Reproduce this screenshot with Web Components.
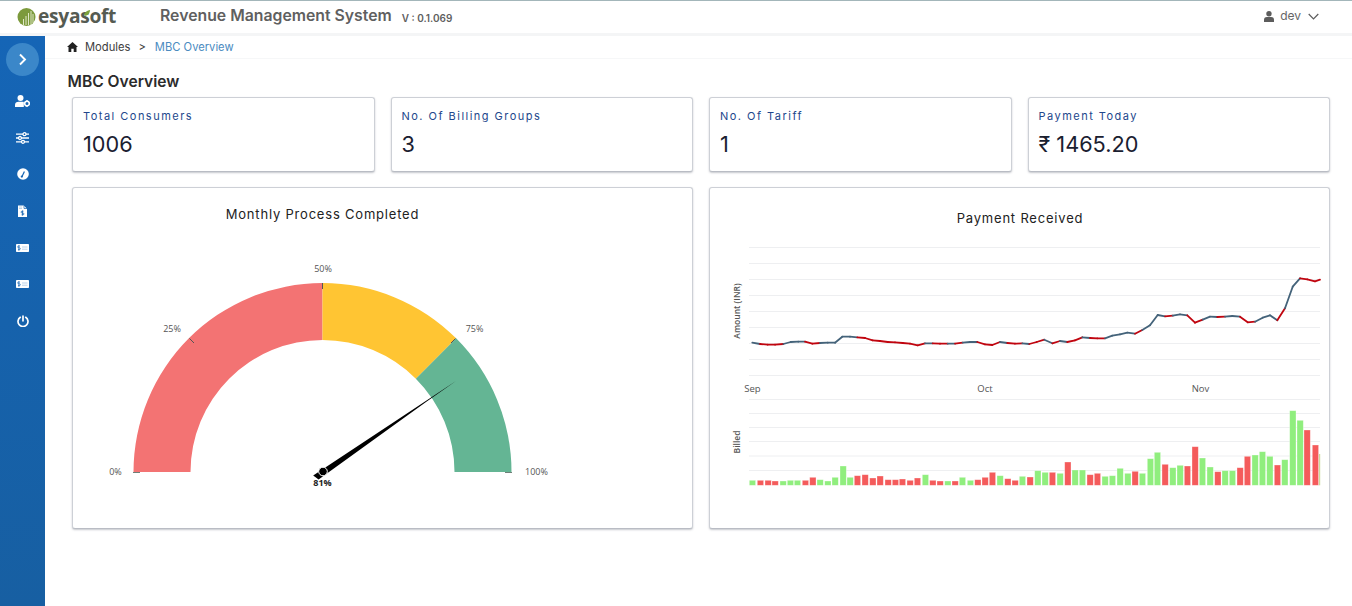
<!DOCTYPE html>
<html lang="en"><head><meta charset="utf-8"><title>MBC Overview</title>
<style>html,body{margin:0;padding:0;background:#fff;font-family:Inter,"Liberation Sans",sans-serif}</style>
</head><body>
<app-shell>
  <top-bar slot="top"></top-bar>
  <side-nav slot="side"></side-nav>
  <bread-crumb></bread-crumb>
  <page-title>MBC Overview</page-title>
  <stat-row>
    <stat-card label="Total Consumers" value="1006"></stat-card>
    <stat-card label="No. Of Billing Groups" value="3"></stat-card>
    <stat-card label="No. Of Tariff" value="1"></stat-card>
    <stat-card label="Payment Today" value="₹ 1465.20"></stat-card>
  </stat-row>
  <chart-row>
    <gauge-chart></gauge-chart>
    <payment-chart></payment-chart>
  </chart-row>
</app-shell>
<script>
function comp(name, html, setup){
  customElements.define(name, class extends HTMLElement{
    constructor(){super();this.attachShadow({mode:'open'});}
    connectedCallback(){
      this.shadowRoot.innerHTML = typeof html==='function'?html(this):html;
      if(setup)setup(this);
    }
  });
}
comp('app-shell',`<style>
:host{display:grid;grid-template-columns:45px 1fr;grid-template-rows:36px 1fr;width:100%;height:100vh;overflow:hidden;min-height:606px}
.top{grid-column:1/3}.main{display:flex;flex-direction:column;min-width:0}
</style><div class="top"><slot name="top"></slot></div><slot name="side"></slot><div class="main"><slot></slot></div>`);

comp('top-bar',`<style>
:host{display:flex;align-items:center;height:36px;box-sizing:border-box;border-top:1px solid #a3b6ba;border-bottom:3px solid #f4f5f6;background:#fff;padding-left:17px;color:#5c5c5c}
.logo{display:flex;align-items:center;width:143px;height:32px}
.brand{position:relative;font:700 19.2px/1 "Open Sans",sans-serif;color:#555b52;letter-spacing:-.3px;margin-left:1px;margin-top:-3px}
.leaf{position:absolute;left:44.500px;top:3.500px}
h1{margin:0;font:600 15.8px/1 Inter,sans-serif;color:#5f5f5f;margin-top:-2px}
.ver{font:600 10px/1 Inter,sans-serif;margin-left:10px;color:#5f5f5f;margin-top:2px}
.user{margin-left:auto;margin-right:33px;display:flex;align-items:center;font:400 12px/1 Inter,sans-serif;color:#666;margin-top:-2px}
.user span{margin:0 7px 0 6px}
</style>
<div class="logo">
<svg width="20" height="20" viewBox="0 0 20 20"><circle cx="9.500" cy="10" r="9" fill="#7c9a3c"/><g stroke="#dfe7c6" stroke-width="1"><path d="M6.500 18V12M9 18V9M11.500 18V6M14 18V4M16 16V7"/></g></svg>
<div class="brand">esyasoft<svg class="leaf" width="8" height="8" viewBox="0 0 9 9"><path d="M1 7C2 3 5 1.500 8 1 7.500 5 5 7.500 2.500 7.500Z" fill="#7fa23b"/></svg></div>
</div>
<h1>Revenue Management System</h1><div class="ver">V : 0.1.069</div>
<div class="user"><svg width="10" height="11" viewBox="0 0 10 11" fill="#5c5c5c"><circle cx="5" cy="2.800" r="2.700"/><path d="M0 11V8.500C0 6.800 1.500 6 2.800 6H7.200C8.500 6 10 6.800 10 8.500V11Z"/></svg><span>dev</span><svg width="11" height="7" viewBox="0 0 11 7" fill="none" stroke="#5c5c5c" stroke-width="1.200"><path d="M.7 1l4.800 4.800L10.300 1"/></svg></div>`);

comp('side-nav',`<style>
:host{display:flex;flex-direction:column;align-items:center;background:linear-gradient(#1565b6,#175fa2);padding-top:7px;box-sizing:border-box}
.toggle{width:33px;height:33px;border-radius:50%;background:#3b87c9;display:flex;align-items:center;justify-content:center;margin-bottom:6.670px}
.i{height:36.670px;display:flex;align-items:center;justify-content:center;width:100%}
svg{display:block}
</style>
<div class="toggle"><svg width="9" height="13" viewBox="0 0 9 13" fill="none" stroke="#fff" stroke-width="1.900"><path d="M2 1.500L7 6.500 2 11.500"/></svg></div>
<div class="i"><svg width="15" height="12" viewBox="0 0 15 12" fill="#fff"><circle cx="5.500" cy="3" r="3"/><path d="M0 12V10C0 8 1.500 6.800 3.500 6.800H7.500C8 6.800 8.500 7 8.800 7.100V12Z"/><circle cx="12" cy="8.500" r="2.300" fill="none" stroke="#fff" stroke-width="1.600"/><path d="M11.300 5h1.400v1.500h-1.400zM11.300 10.500h1.400V12h-1.400zM8.700 7.800h1.300v1.400H8.700zM14 7.800h1v1.400h-1z"/></svg></div>
<div class="i"><svg width="13" height="12" viewBox="0 0 13 12" fill="none" stroke="#fff" stroke-width="1.300"><path d="M0 2.200h13M0 6h13M0 9.800h13"/><circle cx="8.500" cy="2.200" r="1.500" fill="#1564b3"/><circle cx="4" cy="6" r="1.500" fill="#1564b3"/><circle cx="7" cy="9.800" r="1.500" fill="#1564b3"/></svg></div>
<div class="i"><svg width="12" height="12" viewBox="0 0 12 12"><circle cx="6" cy="6" r="5.800" fill="#fff"/><path d="M4.800 9L7.400 3.400" stroke="#1564b3" stroke-width="1.200"/><circle cx="4.800" cy="8.600" r="1.100" fill="#1564b3"/></svg></div>
<div class="i"><svg width="9" height="12" viewBox="0 0 9 12"><path d="M0 .5h5.800L9 3.700V12H0Z" fill="#fff"/><path d="M6 .5V3.500H9" fill="none" stroke="#1564b3" stroke-width=".7"/><path d="M1 2h3M1 3.500h3" stroke="#8fb5da" stroke-width=".6"/><path d="M5.500 6.200H4a.9.900 0 0 0 0 1.800h1a.9.900 0 0 1 0 1.800H3.500M4.500 5.500v5" fill="none" stroke="#1564b3" stroke-width=".8"/></svg></div>
<div class="i"><svg width="13" height="8" viewBox="0 0 13 8"><rect width="13" height="8" rx=".8" fill="#fff"/><path d="M3.800 2H2.600a.8.800 0 0 0 0 1.800h.8a.8.800 0 0 1 0 1.800H2M2.900 1.200v5.600" fill="none" stroke="#1564b3" stroke-width=".7"/><path d="M6 3h5.500M6 5.200h5.500" stroke="#9dbfe0" stroke-width=".7"/></svg></div>
<div class="i"><svg width="13" height="8" viewBox="0 0 13 8"><rect width="13" height="8" rx=".8" fill="#fff"/><path d="M3.800 2H2.600a.8.800 0 0 0 0 1.800h.8a.8.800 0 0 1 0 1.800H2M2.900 1.200v5.600" fill="none" stroke="#1564b3" stroke-width=".7"/><path d="M6 3h5.500M6 5.200h5.500" stroke="#9dbfe0" stroke-width=".7"/></svg></div>
<div class="i"><svg width="12" height="12" viewBox="0 0 12 12" fill="none" stroke="#fff" stroke-width="1.700" stroke-linecap="round"><path d="M3.300 2.300a5 5 0 1 0 5.400 0M6 1v4.800"/></svg></div>`);

comp('bread-crumb',`<style>
:host{display:flex;align-items:center;height:23px;box-sizing:border-box;border-bottom:1px solid #f6f7f8;padding:1px 0 0 22px;font:400 11.200px/1 Inter,sans-serif;color:#3d3d3d}
.m{margin-left:7px}.s{margin:0 9px 0 8px}.c{color:#4b8bbf}
svg{margin-top:-1px}
</style><svg width="11" height="10" viewBox="0 0 11 10" fill="#222"><path d="M5.500 0L11 5H9.500V10H6.700V6.700H4.300V10H1.500V5H0Z"/></svg><span class="m">Modules</span><span class="s">&gt;</span><span class="c">MBC Overview</span>`);

comp('page-title',`<style>
:host{display:block;padding:14px 0 0 22.500px;height:38px;box-sizing:border-box;font:600 15.600px/17px Inter,sans-serif;color:#2b2b2b}
</style><slot></slot>`);

comp('stat-row',`<style>
:host{display:grid;grid-template-columns:repeat(4,1fr);gap:16px;margin:0 22px 0 27px}
</style><slot></slot>`);

comp('stat-card',h=>`<style>
:host{display:block;height:75px;box-sizing:border-box;border:1px solid #cdd0d6;border-bottom-color:#b9bcc4;border-radius:3px;box-shadow:0 1px 2px rgba(90,95,110,.35);background:#fff;padding:11px 10px}
.l{font:400 11px/14px Inter,sans-serif;letter-spacing:1.480px;color:#22478c}
.v{font:400 21.700px/29px Inter,sans-serif;color:#1a2030;margin-top:7px}
</style><div class="l">${h.getAttribute('label')}</div><div class="v">${h.getAttribute('value')}</div>`);

comp('chart-row',`<style>
:host{display:grid;grid-template-columns:1fr 1fr;gap:16px;margin:15px 22px 0 27px}
</style><slot></slot>`);

const cardCss=`:host{display:block;height:342px;box-sizing:border-box;border:1px solid #cdd0d6;border-bottom-color:#b9bcc4;border-radius:3px;box-shadow:0 1px 2px rgba(90,95,110,.35);background:#fff;overflow:hidden}
svg{display:block;width:100%;height:100%}
text{font-family:"Open Sans",sans-serif}
.t{font:400 13px Inter,sans-serif;letter-spacing:.8px;fill:#222;text-anchor:middle}`;

const cx=322.5,cy=472,R=189,r=132;
function seg(a0,a1,col){
  const p=(rad,a)=>[(cx-rad*Math.cos(a)).toFixed(2),(cy-rad*Math.sin(a)).toFixed(2)].join(' ');
  return `<path fill="${col}" d="M${p(R,a0)}A${R} ${R} 0 0 1 ${p(R,a1)}L${p(r,a1)}A${r} ${r} 0 0 0 ${p(r,a0)}Z"/>`;
}
comp('gauge-chart',()=>{
  const pi=Math.PI;
  const lbl=(x,y,s,extra='')=>`<text x="${x}" y="${y}" font-size="9" fill="#555" text-anchor="middle" ${extra}>${s}</text>`;
  return `<style>${cardCss}</style><svg viewBox="73 188 619 340" preserveAspectRatio="none">
  <text class="t" x="322.500" y="219">Monthly Process Completed</text>
  ${seg(0,pi/2,'#f37373')}${seg(pi/2,pi*.75,'#ffc533')}${seg(pi*.75,pi,'#64b594')}
  <g stroke="#555" stroke-width="1"><path d="M322.500 283v6M189.500 338.500l4.500 4.500M455.500 338.500l-4.500 4.500" /><path d="M133 472.500h7M505 472.500h7" stroke="#6f7f78"/></g>
  ${lbl(323,272,'50%')}${lbl(172,332,'25%')}${lbl(474.500,332,'75%')}${lbl(115.500,475,'0%')}${lbl(536.500,475,'100%')}
  <path d="M456 381L426 402L318.600 479.600L313.200 475.500L425 401.500Z" fill="#000"/>
  <circle cx="323" cy="471.500" r="4.300" fill="#000" stroke="#fff" stroke-width="1"/>
  ${lbl(322.500,486,'81%','font-weight="700" style="fill:#222"')}
  </svg>`;
});

comp('payment-chart',()=>{
  const L=[[82,323],[105,327],[128,329],[150,329],[175,327],[197,321],[220,320],[240,320],[262,326],[285,324],[308,323],[330,323],[352,305],[375,305],[397,307],[420,309],[443,316],[465,318],[488,321],[510,322],[533,324],[555,326],[578,331],[600,325],[623,325],[645,326],[668,326],[690,326],[713,323],[735,321],[757,321],[780,328],[802,330],[825,321],[847,324],[870,326],[892,325]]
    .map(p=>[725+p[0]/3,235+p[1]/3]);
  const L2=[[28,327],[50,321],[73,314],[97,325],[120,318],[142,321],[165,316],[187,307],[210,309],[232,310],[255,310],[277,302],[300,298],[322,293],[345,296],[367,285],[390,271],[413,240],[435,244],[458,242],[480,238],[502,241],[525,263],[548,254],[570,245],[592,246],[615,245],[637,243],[660,245],[683,262],[705,260],[728,248],[750,241],[772,256],[795,220],[818,155],[840,130],[862,133],[885,139],[900,134]]
    .map(p=>[1020+p[0]/3,235+p[1]/3]);
  const pts=L.concat(L2);
  const red=[[760,783.3],[805,820],[857.3,925],[932.7,947.7],[955,962.7],[977.3,1000],[1007.3,1022.3],[1029.3,1044.3],[1052.3,1060],[1067.3,1082.3],[1090,1105],[1135,1142.3],[1165,1172.7],[1187.3,1202.7],[1217.3,1225],[1240,1255],[1277.3,1285],[1300,1321]];
  let line='';
  for(let i=0;i<pts.length-1;i++){
    const m=(pts[i][0]+pts[i+1][0])/2;
    const c=red.some(q=>m>=q[0]&&m<=q[1])?'#c0050f':'#44637a';
    line+=`<path d="M${pts[i][0].toFixed(1)} ${pts[i][1].toFixed(1)}L${pts[i+1][0].toFixed(1)} ${pts[i+1][1].toFixed(1)}" stroke="${c}"/>`;
  }
  let grid='';
  [247.5,263.5,279.5,295.5,311.5,327.5,343.5,359.5,375.5].forEach(y=>grid+=`M749 ${y}H1320`);
  [399.5,413.5,427.5,441.5,456,470.5].forEach(y=>grid+=`M749 ${y}H1320`);
  const B6=[[73,271,'g'],[97,271,'r'],[120,271,'r'],[141,273,'r'],[165,273,'g'],[187,271,'g'],[208,271,'g'],[232,271,'r'],[254,262,'r'],[276,269,'g'],[299,273,'g'],[321,262,'g'],[345,228,'g'],[366,262,'g'],[388,257,'r'],[411,254,'r'],[434,264,'r'],[456,258,'r'],[480,269,'r'],[502,269,'r'],[523,267,'r'],[546,271,'r'],[568,264,'r'],[592,254,'g'],[614,271,'r'],[636,273,'r'],[659,273,'g'],[681,273,'r'],[703,262,'g'],[727,271,'g'],[749,269,'r'],[771,262,'r'],[793,247,'r'],[816,257,'g'],[839,266,'r'],[861,271,'r'],[883,259,'g'],[906,261,'r']];
  const B7=[[44,242,'g'],[66,247,'g'],[88,247,'r'],[111,250,'g'],[134,216,'r'],[156,240,'g'],[178,240,'g'],[201,254,'r'],[223,250,'r'],[246,259,'g'],[268,257,'g'],[291,235,'g'],[314,250,'g'],[336,244,'r'],[358,250,'g'],[382,206,'g'],[403,187,'g'],[426,223,'r'],[449,233,'g'],[471,226,'g'],[493,228,'r'],[516,170,'r'],[538,204,'g'],[561,231,'g'],[584,245,'r'],[606,242,'g'],[628,242,'g'],[651,233,'r'],[673,199,'r'],[696,195,'g'],[718,185,'g'],[740,199,'g'],[763,225,'r'],[785,209,'g'],[809,62,'g'],[831,91,'g'],[852,120,'r'],[877,165,'r']];
  let bars='';
  const add=(x,z,c)=>{const y=390+z/3,h=485.3-y;bars+=`<rect x="${x.toFixed(1)}" y="${y.toFixed(1)}" width="6.300" height="${h.toFixed(1)}" fill="${c==='g'?'#90ee7e':'#f45b5b'}" stroke="#fff" stroke-opacity=".45" stroke-width=".7"/>`;};
  B6.forEach(b=>add(725+b[0]/3,b[1],b[2]));
  B7.forEach(b=>add(1020+b[0]/3,b[1],b[2]));
  bars+=`<rect x="1319" y="454" width="1.200" height="31.300" fill="#c9dc9a"/>`;
  const ax=(x,s)=>`<text x="${x}" y="392" font-size="9.500" fill="#555" text-anchor="middle">${s}</text>`;
  const yl=(y,s)=>`<text transform="translate(740 ${y}) rotate(-90)" font-size="8.500" font-weight="600" fill="#555" text-anchor="middle">${s}</text>`;
  return `<style>${cardCss}</style><svg viewBox="710 188 619 340" preserveAspectRatio="none">
  <text class="t" x="1020" y="223">Payment Received</text>
  <path d="${grid}" stroke="#eeeff1" stroke-width="1" fill="none"/>
  <g fill="none" stroke-width="1.800" stroke-linecap="round">${line}</g>
  ${ax(752.500,'Sep')}${ax(985,'Oct')}${ax(1200.500,'Nov')}
  ${yl(311,'Amount (INR)')}${yl(442,'Billed')}
  ${bars}</svg>`;
});
</script>
</body></html>
